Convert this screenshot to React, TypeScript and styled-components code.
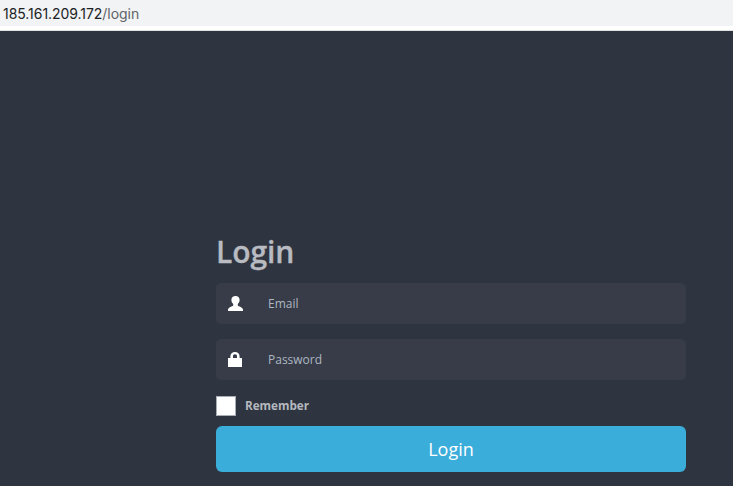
import React from 'react';
import styled, { createGlobalStyle } from 'styled-components';

const GlobalStyle = createGlobalStyle`
  html, body {
    margin: 0;
    padding: 0;
    height: 100%;
    background: #ffffff;
  }
  * {
    box-sizing: border-box;
  }
`;

const Page = styled.div`
  width: 733px;
  height: 486px;
  overflow: hidden;
  display: flex;
  flex-direction: column;
`;

const AddressBar = styled.div`
  height: 26px;
  background: #f1f3f4;
  padding-left: 3px;
  display: flex;
  align-items: center;
  font-family: 'Inter', 'Roboto', sans-serif;
  font-size: 14px;
  letter-spacing: -0.05px;
  color: #202124;
`;

const UrlPath = styled.span`
  color: #5f6368;
`;

const Gap = styled.div`
  height: 5px;
  background: #ffffff;
  border-bottom: 1px solid #e0e0e0;
`;

const Screen = styled.div`
  flex: 1;
  background: #2f3540;
  padding: 201px 0 0 216px;
  font-family: 'Open Sans', sans-serif;
`;

const Form = styled.form`
  width: 470px;
  display: flex;
  flex-direction: column;
`;

const Title = styled.h1`
  margin: 0 0 12px;
  height: 39px;
  line-height: 39px;
  font-size: 30px;
  font-weight: 600;
  letter-spacing: -0.1px;
  color: #b8bbc1;
  -webkit-text-stroke: 0.3px #b8bbc1;
`;

const Field = styled.label`
  height: 41px;
  margin-bottom: 15px;
  background: #373c48;
  border-radius: 5px;
  display: flex;
  align-items: center;
`;

const FieldIcon = styled.span`
  width: 50px;
  padding-left: 12px;
  display: flex;
  align-items: center;
  flex-shrink: 0;

  svg {
    display: block;
    width: 15px;
    height: 15px;
    fill: #ffffff;
  }
`;

const Input = styled.input`
  flex: 1;
  min-width: 0;
  border: 0;
  outline: 0;
  padding: 1px 2px;
  background: transparent;
  font-family: inherit;
  font-size: 12px;
  color: #aeb6c2;

  &::placeholder {
    color: #aeb6c2;
    opacity: 1;
  }
`;

const RememberRow = styled.label`
  height: 20px;
  margin: 1px 0 10px;
  display: flex;
  align-items: center;
  gap: 9px;
`;

const RememberText = styled.span`
  margin-top: -2px;
  font-size: 11.7px;
  font-weight: 700;
  color: #b4b8bf;
`;

const Check = styled.input`
  appearance: none;
  width: 20px;
  height: 20px;
  margin: 0;
  background: #ffffff;
  border: 1px solid #a9adb5;
`;

const SubmitButton = styled.button`
  height: 46px;
  border: 0;
  border-radius: 6px;
  background: #3badda;
  color: #ffffff;
  font-family: inherit;
  font-size: 18px;
  padding: 0;
`;

const UserIcon = () => (
  <svg viewBox="0 0 15 15">
    <path d="M7.500 0C5.100 0 3.400 1.500 3.400 4c0 1.500.6 3 1.800 3.900v1.300c0 .5-.4.8-1.200 1.100C2.400 11 .6 11.700 0 13.500V15h15v-1.500c-.6-1.800-2.400-2.500-4-3.200-.8-.3-1.200-.6-1.200-1.100V7.900C11 7 11.600 5.500 11.600 4 11.600 1.500 9.900 0 7.500 0z" />
  </svg>
);

const LockIcon = () => (
  <svg viewBox="0 0 15 15">
    <path d="M7 0C4.200 0 2.400 1.700 2.400 4.200V6H0v9h14V6h-2.400V4.200C11.600 1.700 9.800 0 7 0zM5 6V4.200C5 3 5.800 2.300 7 2.300s2 .7 2 1.900V6z" fillRule="evenodd" />
  </svg>
);

const App = () => (
  <Page>
    <GlobalStyle />
    <AddressBar>
      185.161.209.172<UrlPath>/login</UrlPath>
    </AddressBar>
    <Gap />
    <Screen>
      <Form onSubmit={(e) => e.preventDefault()}>
        <Title>Login</Title>
        <Field>
          <FieldIcon>
            <UserIcon />
          </FieldIcon>
          <Input type="text" placeholder="Email" />
        </Field>
        <Field>
          <FieldIcon>
            <LockIcon />
          </FieldIcon>
          <Input type="password" placeholder="Password" />
        </Field>
        <RememberRow>
          <Check type="checkbox" />
          <RememberText>Remember</RememberText>
        </RememberRow>
        <SubmitButton type="submit">Login</SubmitButton>
      </Form>
    </Screen>
  </Page>
);

export default App;
